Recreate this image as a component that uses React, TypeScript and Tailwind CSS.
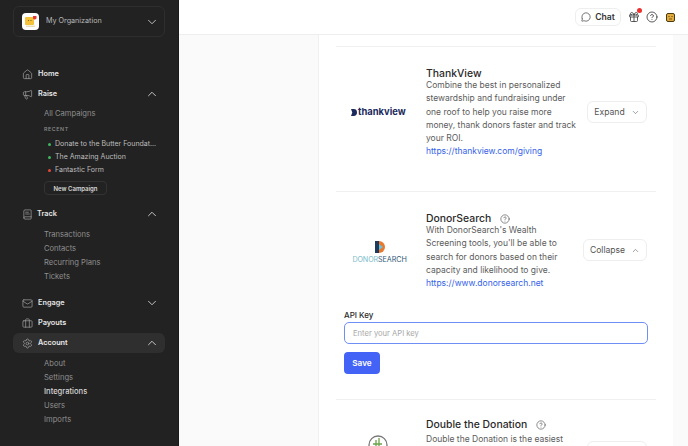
import { ChevronDown, ChevronUp, CircleHelp, Gift, House, Mail, Megaphone, MessageCircle, Briefcase, Settings, BookText } from 'lucide-react';
import type { ReactNode } from 'react';

const NavRow = ({ icon, label, open, active, shift }: { icon: ReactNode; label: string; open?: boolean; active?: boolean; shift?: boolean }) => (
  <div className={`flex h-[20px] items-center rounded-md pl-[9px] pr-[3px] ${active ? 'bg-[#2f2f2f]' : ''}`}>
    <span className="flex w-[16px] shrink-0 items-center text-[#a3a3a3]">{icon}</span>
    <span className={`text-[7.3px] font-semibold text-[#e6e6e6] ${shift ? 'ml-[-1px]' : ''}`}>{label}</span>
    {open === true && <ChevronUp className="ml-auto mr-[3px] h-[14px] w-[14px] text-[#d8d8d8]" strokeWidth={1.5} />}
    {open === false && <ChevronDown className="ml-auto mr-[3px] h-[14px] w-[14px] text-[#d8d8d8]" strokeWidth={1.5} />}
  </div>
);

const SubLink = ({ label, current }: { label: string; current?: boolean }) => (
  <div className={`flex h-[14px] items-center pl-[31px] text-[7.6px] ${current ? 'font-medium text-[#d6d6d6]' : 'text-[#8e8e8e]'}`}>{label}</div>
);

const Recent = ({ label, color }: { label: string; color: string }) => (
  <div className="flex h-[13px] items-center pl-[35px] text-[7px] text-[#bdbdbd]">
    <span className={`mr-[4px] h-[3px] w-[3px] rounded-full ${color}`} />
    <span className="whitespace-nowrap">{label}</span>
  </div>
);

const Sidebar = () => (
  <aside className="flex h-[446px] w-[179px] shrink-0 flex-col overflow-hidden border-r border-[#1a1a1a] bg-[#222222] pl-[13px] pr-[13px] pt-[6px]">
    <div className="flex h-[31px] items-center rounded-md border border-[#2e2e2e] pl-[8px] pr-[5px]">
      <span className="flex h-[17px] w-[17px] items-center justify-center rounded-[4px] bg-white">
        <svg viewBox="0 0 17 17" className="h-[17px] w-[17px]">
          <rect x="3" y="4" width="9" height="8" rx="1" fill="#f5c33b" />
          <rect x="4" y="12.5" width="9" height="1.5" fill="#e9dfb8" />
          <circle cx="6.5" cy="7.5" r="0.6" fill="#7a5a10" />
          <circle cx="9" cy="7.5" r="0.6" fill="#7a5a10" />
          <path d="M11 3h3.5v2.5l-1.7 1.2L11 5.5z" fill="#e5383b" />
        </svg>
      </span>
      <span className="ml-[7px] text-[7.2px] text-[#b9b9b9]">My Organization</span>
      <ChevronDown className="ml-auto h-[14px] w-[14px] text-[#cfcfcf]" strokeWidth={1.5} />
    </div>

    <div className="mt-[27px] flex flex-col">
      <NavRow icon={<House className="h-[11px] w-[11px]" strokeWidth={1.5} />} label="Home" />
      <NavRow icon={<Megaphone className="h-[11px] w-[11px]" strokeWidth={1.5} />} label="Raise" open />
      <div className="mt-[3px]"><SubLink label="All Campaigns" /></div>
      <div className="mt-[4px] flex h-[10px] items-center pl-[31px] text-[5.3px] font-medium tracking-[0.6px] text-[#8e8e8e]">RECENT</div>
      <div className="mt-[3px] flex flex-col">
        <Recent label="Donate to the Butter Foundat..." color="bg-[#3fb560]" />
        <Recent label="The Amazing Auction" color="bg-[#3fb560]" />
        <Recent label="Fantastic Form" color="bg-[#e5483b]" />
      </div>
      <div className="ml-[31px] mt-[4px] flex h-[14px] w-[63px] items-center justify-center rounded-[4px] border border-[#333333] text-[6px] font-semibold text-[#d8d8d8]">New Campaign</div>
      <div className="mt-[9px]"><NavRow icon={<BookText className="h-[11px] w-[11px]" strokeWidth={1.5} />} label="Track" open shift /></div>
      <div className="mt-[4px] flex flex-col">
        <SubLink label="Transactions" />
        <SubLink label="Contacts" />
        <SubLink label="Recurring Plans" />
        <SubLink label="Tickets" />
      </div>
      <div className="mt-[9px]"><NavRow icon={<Mail className="h-[11px] w-[11px]" strokeWidth={1.5} />} label="Engage" open={false} /></div>
      <NavRow icon={<Briefcase className="h-[11px] w-[11px]" strokeWidth={1.5} />} label="Payouts" />
      <NavRow icon={<Settings className="h-[11px] w-[11px]" strokeWidth={1.5} />} label="Account" open active />
      <div className="mt-[4px] flex flex-col">
        <SubLink label="About" />
        <SubLink label="Settings" />
        <SubLink label="Integrations" current />
        <SubLink label="Users" />
        <SubLink label="Imports" />
      </div>
    </div>
  </aside>
);

const Header = () => (
  <header className="flex h-[35px] shrink-0 items-center justify-end border-b border-[#eeeeee] bg-white pr-[13px]">
    <div className="flex h-[18px] w-[46px] items-center justify-center gap-[4px] rounded-md border border-[#eeeeee] text-[8.6px] font-semibold text-[#333333]">
      <MessageCircle className="h-[10px] w-[10px]" strokeWidth={1.6} />
      Chat
    </div>
    <div className="relative ml-[7px]">
      <Gift className="h-[12px] w-[12px] text-[#333333]" strokeWidth={1.6} />
      <span className="absolute right-[-2px] top-[-3px] h-[5px] w-[5px] rounded-full bg-[#ee3030]" />
    </div>
    <CircleHelp className="ml-[6px] h-[12px] w-[12px] text-[#333333]" strokeWidth={1.6} />
    <svg viewBox="0 0 9 9" className="ml-[8px] h-[9px] w-[9px]">
      <rect x="0.5" y="0.5" width="8" height="8" rx="1.5" fill="#e0ab3c" stroke="#4a3a10" />
      <circle cx="3" cy="3.5" r="0.6" fill="#4a3a10" />
      <circle cx="6" cy="3.5" r="0.6" fill="#4a3a10" />
      <path d="M3 6h3" stroke="#4a3a10" strokeWidth="0.7" />
    </svg>
  </header>
);

const ActionButton = ({ label, open }: { label: string; open?: boolean }) => (
  <div className={`flex h-[22px] items-center justify-center gap-[6px] rounded-md border border-[#eeeeee] text-[8.6px] text-[#555555] ${open ? 'w-[64px]' : 'w-[60px]'}`}>
    {label}
    {open ? <ChevronUp className="h-[9px] w-[9px]" strokeWidth={1.5} /> : <ChevronDown className="h-[9px] w-[9px]" strokeWidth={1.5} />}
  </div>
);

const Main = () => (
  <main className="flex h-[446px] min-w-0 flex-1 flex-col overflow-hidden bg-[#fafafa]">
    <Header />
    <div className="ml-[139px] w-[355px] flex-1 overflow-hidden border-l border-[#f0f0f0] bg-white pl-[17px] pr-[17px] pt-[11px] text-[#5c5c5c]">
      <div className="border-t border-[#f0f0f0]" />

      {/* ThankView */}
      <section className="flex h-[145px] items-start border-b border-[#f0f0f0] pt-[20px]">
        <div className="flex h-[90px] w-[90px] shrink-0 items-center pl-[15px]">
          <svg viewBox="0 0 7 8" className="h-[7px] w-[6px] shrink-0"><path d="M0 0h3a4 4 0 0 1 0 8H0l1.5-4z" fill="#1b2a5c" /></svg>
          <span className="ml-[1px] text-[9.4px] font-bold leading-none text-[#1b2a5c]">thankview</span>
        </div>
        <div className="w-[150px] shrink-0">
          <h3 className="mb-[-2px] text-[10.4px] font-medium leading-[14px] text-[#2a2a2a]">ThankView</h3>
          <p className="text-[8.5px] leading-[13.3px]">Combine the best in personalized stewardship and fundraising under one roof to help you raise more money, thank donors faster and track your ROI.</p>
          <p className="text-[8.5px] leading-[13.3px] text-[#3563e9]">https://thankview.com/giving</p>
        </div>
        <div className="ml-auto mr-[9px] mt-[34px]"><ActionButton label="Expand" /></div>
      </section>

      {/* DonorSearch */}
      <section className="h-[208px] border-b border-[#f0f0f0] pt-[20px]">
        <div className="flex items-start">
          <div className="flex h-[80px] w-[90px] shrink-0 flex-col items-center justify-center pr-[3px]">
            <svg viewBox="0 0 10 12" className="h-[12px] w-[10px]">
              <path d="M0 0h4v12H0z" fill="#1f3a5c" />
              <path d="M4 0a6 6 0 0 1 0 12z" fill="#e8792e" />
              <path d="M4 3l4 3-4 3z" fill="#6fc1d6" />
            </svg>
            <span className="mt-[3px] whitespace-nowrap text-[7.2px] leading-none tracking-[-0.1px] text-[#7dbccb]">DONOR<span className="text-[#335a78]">SEARCH</span></span>
          </div>
          <div className="w-[150px] shrink-0">
            <h3 className="mb-[-2px] flex items-center text-[10.4px] font-medium leading-[14px] text-[#2a2a2a]">DonorSearch<CircleHelp className="ml-[9px] h-[10px] w-[10px] text-[#555555]" strokeWidth={1.6} /></h3>
            <p className="text-[8.5px] leading-[13.3px]">With DonorSearch's Wealth Screening tools, you'll be able to search for donors based on their capacity and likelihood to give.</p>
            <p className="text-[8.5px] leading-[13.3px] text-[#3563e9]">https://www.donorsearch.net</p>
          </div>
          <div className="ml-auto mr-[9px] mt-[27px]"><ActionButton label="Collapse" open /></div>
        </div>
        <div className="ml-[8px] mr-[8px] mt-[18px]">
          <label className="block text-[8px] font-medium leading-[10px] text-[#2a2a2a]">API Key</label>
          <input placeholder="Enter your API key" className="mt-[2px] block h-[22px] w-full rounded-[5px] border border-[#6f8ff5] bg-white px-[8px] text-[7.6px] outline-none placeholder:text-[#a8a8a8]" />
          <button className="mt-[8px] flex h-[22px] w-[36px] items-center justify-center rounded-[4px] bg-[#4263f5] text-[8.2px] font-semibold text-white">Save</button>
        </div>
      </section>

      {/* Double the Donation */}
      <section className="flex items-start pt-[18px]">
        <div className="flex h-[60px] w-[90px] shrink-0 justify-center pr-[6px] pt-[17px]">
          <svg viewBox="0 0 20 20" className="h-[20px] w-[20px]" fill="none">
            <circle cx="10" cy="10" r="9" stroke="#777777" strokeWidth="1.3" />
            <path d="M8 5v9M11 3v11M5 9h9" stroke="#6ba34a" strokeWidth="1.3" />
          </svg>
        </div>
        <div className="w-[150px] shrink-0">
          <h3 className="mb-[1px] flex items-center whitespace-nowrap text-[10.4px] font-medium leading-[14px] text-[#2a2a2a]">Double the Donation<CircleHelp className="ml-[9px] h-[10px] w-[10px] text-[#555555]" strokeWidth={1.6} /></h3>
          <p className="text-[8.5px] leading-[13.3px]">Double the Donation is the easiest</p>
        </div>
        <div className="ml-auto mr-[9px] mt-[23px]"><ActionButton label="Expand" /></div>
      </section>
    </div>
  </main>
);

export default function App() {
  return (
    <div className="flex h-[446px] w-[688px] overflow-hidden font-['Inter',sans-serif]">
      <Sidebar />
      <Main />
    </div>
  );
}
